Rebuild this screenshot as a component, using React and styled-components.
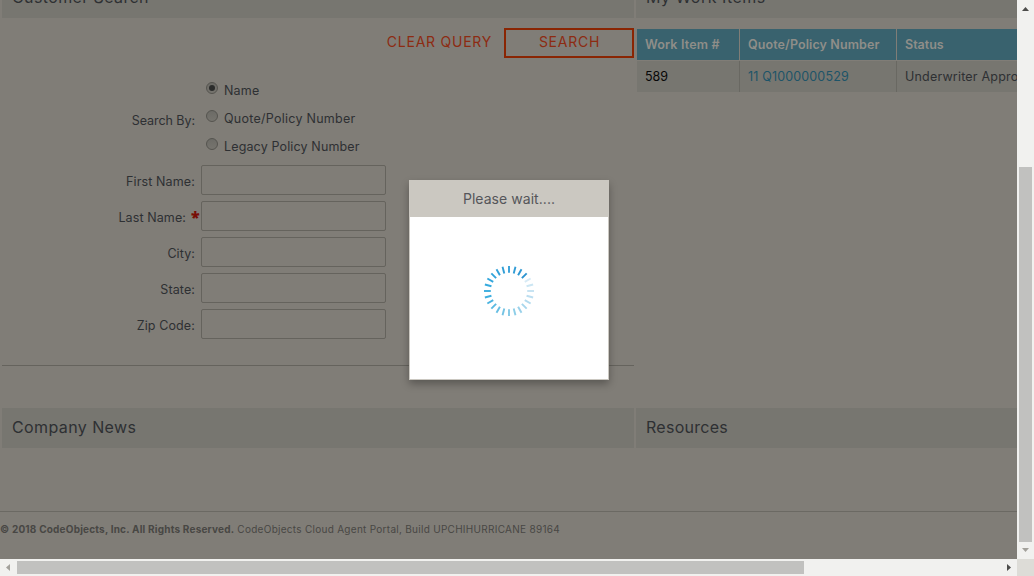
import React from 'react';
import styled, { createGlobalStyle } from 'styled-components';

const GlobalStyle = createGlobalStyle`
  * { box-sizing: border-box; }
  body {
    margin: 0;
    overflow: hidden;
    font-family: Inter, "Liberation Sans", sans-serif;
    font-size: 12.5px;
    color: #2e3033;
  }
`;

const Screen = styled.div`
  position: relative;
  display: grid;
  grid-template: 559px 17px / 1017px 17px;
  width: 1034px;
  height: 576px;
  overflow: hidden;
`;

const Page = styled.main`
  background: #807d77;
  overflow: hidden;
`;

const TopPanels = styled.div`
  display: grid;
  grid-template-columns: 632px 383px;
  column-gap: 2px;
  height: 430px;
  margin: -22px 0 0 2px;
`;

const BottomPanels = styled(TopPanels)`
  height: 103px;
  margin-top: 0;
`;

const PanelTitle = styled.h2`
  height: 40px;
  margin: 0;
  padding: 0 0 0 10px;
  background: #777670;
  font-size: 16px;
  font-weight: 400;
  line-height: 38px;
  letter-spacing: ${(p) => p.$track || 0}px;
  white-space: nowrap;
`;

const Actions = styled.div`
  display: flex;
  justify-content: flex-end;
  gap: 12px;
  margin-top: 10px;
`;

const ActionButton = styled.button`
  width: ${(p) => (p.$outlined ? '130px' : 'auto')};
  height: 30px;
  padding: ${(p) => (p.$outlined ? '0 0 2px 1px' : '0 0 2px')};
  border: ${(p) => (p.$outlined ? '2px solid #8a2503' : '0')};
  background: transparent;
  color: #8d2b12;
  font: 400 14px/24px Inter, sans-serif;
  letter-spacing: 0.75px;
`;

const SearchForm = styled.form`
  display: flex;
  flex-direction: column;
  height: 308px;
  border-bottom: 1px solid #65635d;
`;

const SearchBy = styled.div`
  display: grid;
  grid-template-columns: 193px 1fr;
  column-gap: 11px;
  height: 84px;
  margin-top: 18px;
`;

const SearchByLabel = styled.span`
  align-self: center;
  text-align: right;
  padding-top: 5px;
  letter-spacing: -0.05px;
`;

const RadioList = styled.div`
  display: flex;
  flex-direction: column;
`;

const RadioOption = styled.label`
  display: flex;
  align-items: flex-start;
  gap: 6px;
  height: 28px;
  padding-top: 6px;
  letter-spacing: ${(p) => p.$track || 0}px;

  span { line-height: 17px; }
`;

const RadioDot = styled.i`
  display: grid;
  place-items: center;
  width: 12px;
  height: 12px;
  border: 1px solid #55544f;
  border-radius: 50%;
  background: linear-gradient(#6c6b66, #76746e);

  &::after {
    content: '';
    width: 6px;
    height: 6px;
    border-radius: 50%;
    background: ${(p) => (p.$checked ? '#2b2c2b' : 'transparent')};
  }
`;

const Fields = styled.div`
  display: flex;
  flex-direction: column;
  gap: 6px;
  margin-top: 5px;
`;

const Field = styled.label`
  display: grid;
  grid-template-columns: 193px 185px;
  column-gap: 6px;
  height: 30px;
`;

const FieldLabel = styled.span`
  display: flex;
  justify-content: flex-end;
  padding-top: 3px;
  line-height: 28px;
  letter-spacing: ${(p) => p.$track || 0}px;
`;

const Required = styled.b`
  width: 8px;
  margin: -2px -4px 0 5px;
  color: #780d06;
  font: 800 16px/30px "Open Sans", sans-serif;
`;

const TextInput = styled.input`
  width: 185px;
  height: 30px;
  border: 1px solid #65635d;
  border-radius: 2px;
  background: transparent;
`;

const TableClip = styled.div`
  margin: 11px 0 0 1px;
  overflow: hidden;
`;

const TableRow = styled.div`
  display: grid;
  grid-template-columns: 102px 156px 140px;
  column-gap: 1px;
  height: 31px;
  margin-bottom: 1px;
  background: ${(p) => (p.$head ? '#807d77' : '#696862')};
`;

const Cell = styled.div`
  height: 31px;
  padding-left: 8px;
  background: ${(p) => (p.$head ? '#39626e' : '#777670')};
  color: ${(p) => p.$color || '#2e3033'};
  font-weight: ${(p) => (p.$head ? 600 : 400)};
  line-height: 32px;
  letter-spacing: ${(p) => p.$track || 0}px;
  white-space: nowrap;
`;

const Footer = styled.footer`
  height: 48px;
  padding-top: 10px;
  border-top: 1px solid #6b6963;
  color: #484744;
  font-size: 10px;
  line-height: 14px;
  white-space: pre;

  b { letter-spacing: 0.2px; }
  span { letter-spacing: 0.28px; }
`;

const Modal = styled.section`
  position: absolute;
  left: 409px;
  top: 180px;
  display: flex;
  flex-direction: column;
  width: 200px;
  height: 200px;
  border: 1px solid #cbc8c1;
  background: #fff;
  box-shadow: 0 4px 8px rgba(0, 0, 0, 0.3);
`;

const ModalTitle = styled.header`
  height: 36px;
  background: #cbc8c1;
  color: #55565a;
  font-size: 14px;
  line-height: 36px;
  letter-spacing: 0.05px;
  text-align: center;
`;

const SpinnerArea = styled.div`
  display: flex;
  justify-content: center;
  padding-top: 48px;
`;

const VerticalBar = styled.div`
  display: flex;
  flex-direction: column;
  justify-content: space-between;
  align-items: center;
  background: #f1f1ef;
`;

const HorizontalBar = styled.div`
  display: flex;
  align-items: center;
  background: #f1f1ef;
`;

const VerticalThumb = styled.div`
  width: 13px;
  height: 375px;
  margin-top: 150px;
  background: #c1c1bf;
`;

const HorizontalThumb = styled.div`
  width: 787px;
  height: 13px;
  margin-right: 196px;
  background: #c1c1bf;
`;

const ArrowBox = styled.svg`
  display: block;
  flex: none;
  width: 17px;
  height: 17px;
`;

const Corner = styled.div`
  background: #dddcd7;
`;

const arrows = {
  up: 'M5 11L8.5 7L12 11Z',
  down: 'M5 6L8.5 10L12 6Z',
  left: 'M10 5L6 8.5L10 12Z',
  right: 'M7 5L11 8.5L7 12Z',
};

const Arrow = ({ dir, color }) => (
  <ArrowBox viewBox="0 0 17 17">
    <path d={arrows[dir]} fill={color} />
  </ArrowBox>
);

const tickColors = [
  '#2b93cf', '#2d97d2', '#309cd6', '#36a0d9', '#309ed6', '#2f9fd8',
  '#30a3da', '#32a6dc', '#36aade', '#3aaddf', '#3eafdf', '#49b3e0',
  '#5ab9e1', '#66bee3', '#74c3e4', '#82c9e6', '#8dcee8', '#99d1ea',
  '#a7d6ec', '#b2daee', '#bcdef0', '#c5e2f2', '#cce6f3', '#d7eaf5',
];

const Spinner = () => (
  <svg width="52" height="52" viewBox="-26 -26 52 52">
    {tickColors.map((color, i) => (
      <line
        key={color}
        x1="0" y1="-18.2" x2="0" y2="-25"
        stroke={color}
        strokeWidth="1.9"
        transform={`rotate(${45 - i * 15})`}
      />
    ))}
  </svg>
);

const fields = [
  { label: 'First Name:', track: 0.13 },
  { label: 'Last Name:', track: 0.1, required: true },
  { label: 'City:', track: 0.1 },
  { label: 'State:', track: 0.1 },
  { label: 'Zip Code:', track: 0.12 },
];

export default function App() {
  return (
    <>
      <GlobalStyle />
      <Screen>
        <Page>
          <TopPanels>
            <section>
              <PanelTitle $track={0.38}>Customer Search</PanelTitle>
              <Actions>
                <ActionButton>CLEAR QUERY</ActionButton>
                <ActionButton $outlined>SEARCH</ActionButton>
              </Actions>
              <SearchForm>
                <SearchBy>
                  <SearchByLabel>Search By:</SearchByLabel>
                  <RadioList>
                    <RadioOption $track={0.2}><RadioDot $checked /><span>Name</span></RadioOption>
                    <RadioOption $track={0.26}><RadioDot /><span>Quote/Policy Number</span></RadioOption>
                    <RadioOption $track={0.14}><RadioDot /><span>Legacy Policy Number</span></RadioOption>
                  </RadioList>
                </SearchBy>
                <Fields>
                  {fields.map((f) => (
                    <Field key={f.label}>
                      <FieldLabel $track={f.track}>
                        {f.label}
                        {f.required && <Required>*</Required>}
                      </FieldLabel>
                      <TextInput />
                    </Field>
                  ))}
                </Fields>
              </SearchForm>
            </section>
            <section>
              <PanelTitle $track={0.47}>My Work Items</PanelTitle>
              <TableClip>
                <TableRow $head>
                  <Cell $head $color="#8f8e89" $track={0.16}>Work Item #</Cell>
                  <Cell $head $color="#8f8e89" $track={0.1}>Quote/Policy Number</Cell>
                  <Cell $head $color="#8f8e89">Status</Cell>
                </TableRow>
                <TableRow>
                  <Cell $color="#080808">589</Cell>
                  <Cell $color="#1d5468" $track={0.16}>11 Q1000000529</Cell>
                  <Cell $track={0.2}>Underwriter Approved</Cell>
                </TableRow>
              </TableClip>
            </section>
          </TopPanels>
          <BottomPanels>
            <PanelTitle $track={0.4}>Company News</PanelTitle>
            <PanelTitle $track={0.27}>Resources</PanelTitle>
          </BottomPanels>
          <Footer>
            <b>© 2018 CodeObjects, Inc. All Rights Reserved.</b>
            <span> CodeObjects Cloud Agent Portal, Build UPCHIHURRICANE 89164</span>
          </Footer>
        </Page>
        <VerticalBar>
          <Arrow dir="up" color="#4c4c4a" />
          <VerticalThumb />
          <Arrow dir="down" color="#a3a19b" />
        </VerticalBar>
        <HorizontalBar>
          <Arrow dir="left" color="#a3a19b" />
          <HorizontalThumb />
          <Arrow dir="right" color="#4c4c4a" />
        </HorizontalBar>
        <Corner />
        <Modal>
          <ModalTitle>Please wait....</ModalTitle>
          <SpinnerArea><Spinner /></SpinnerArea>
        </Modal>
      </Screen>
    </>
  );
}
